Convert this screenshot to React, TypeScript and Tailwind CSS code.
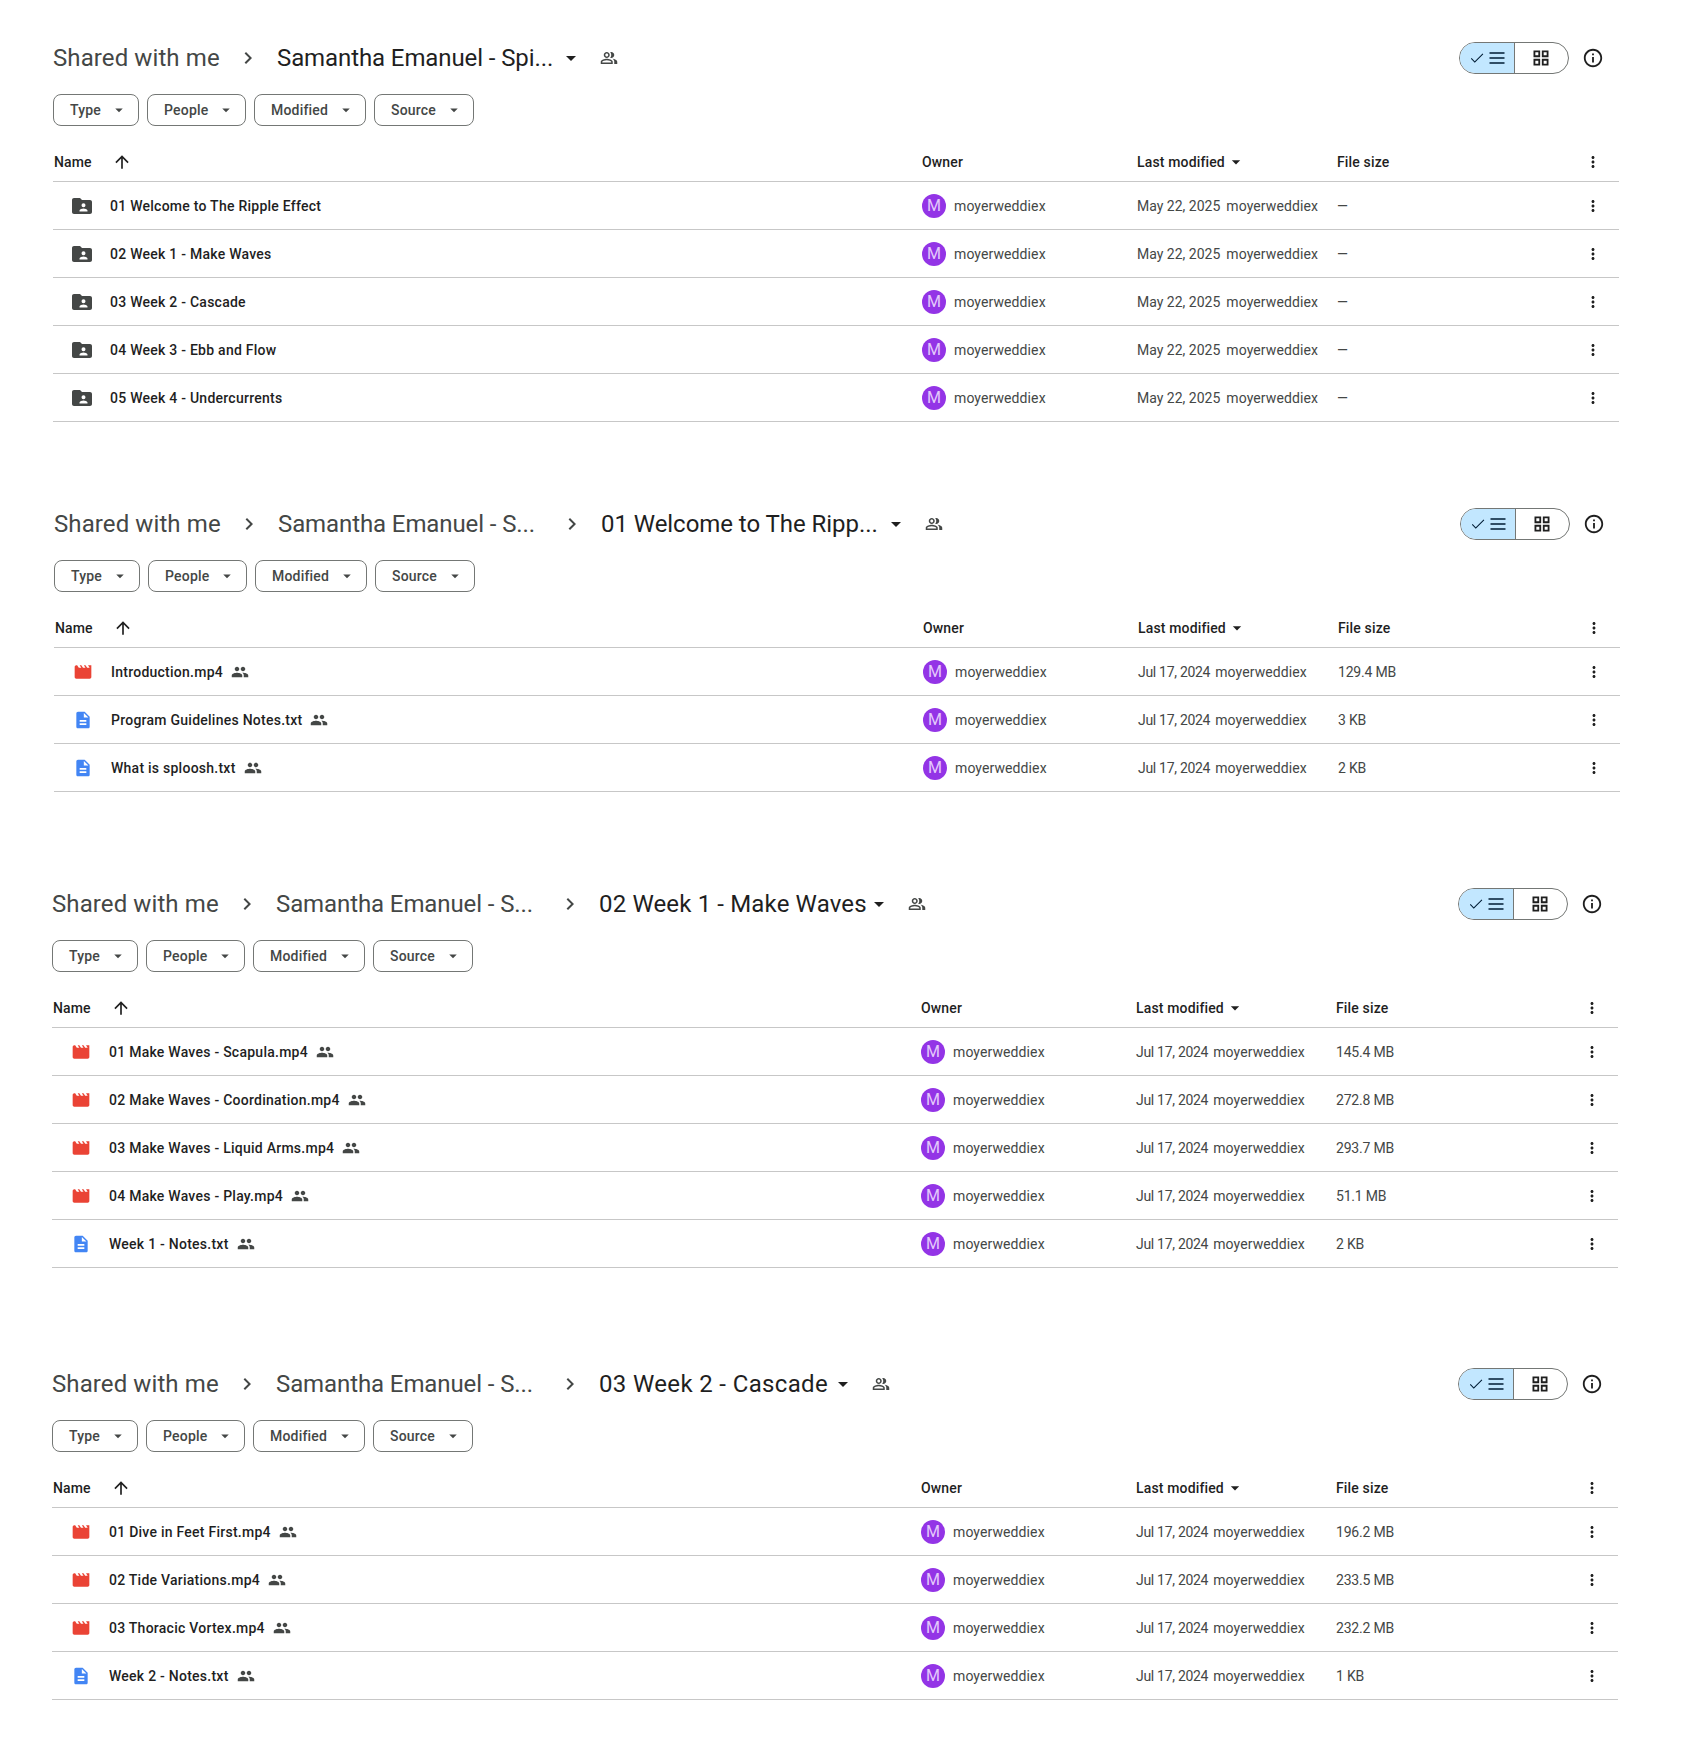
const MORE = 'M12 8c1.1 0 2-.9 2-2s-.9-2-2-2-2 .9-2 2 .9 2 2 2zm0 2c-1.1 0-2 .9-2 2s.9 2 2 2 2-.9 2-2-.9-2-2-2zm0 6c-1.1 0-2 .9-2 2s.9 2 2 2 2-.9 2-2-.9-2-2-2z';
const CARET = 'M7 10l5 5 5-5z';
const PEOPLE = 'M16 11c1.66 0 2.99-1.34 2.99-3S17.66 5 16 5c-1.66 0-3 1.34-3 3s1.34 3 3 3zm-8 0c1.66 0 2.99-1.34 2.99-3S9.66 5 8 5C6.34 5 5 6.34 5 8s1.34 3 3 3zm0 2c-2.33 0-7 1.17-7 3.5V19h14v-2.5c0-2.33-4.67-3.5-7-3.5zm8 0c-.29 0-.62.02-.97.05 1.16.84 1.97 1.97 1.97 3.45V19h6v-2.5c0-2.33-4.67-3.5-7-3.5z';
const PEOPLE_OUTLINE = 'M16.67 13.13C18.04 14.06 19 15.32 19 17v3h4v-3c0-2.18-3.57-3.47-6.33-3.87zM15 12c2.21 0 4-1.79 4-4s-1.79-4-4-4c-.47 0-.91.1-1.33.24C14.5 5.27 15 6.58 15 8s-.5 2.73-1.33 3.76c.42.14.86.24 1.33.24zM9 12c2.21 0 4-1.79 4-4s-1.79-4-4-4-4 1.79-4 4 1.79 4 4 4zm0-6c1.1 0 2 .9 2 2s-.9 2-2 2-2-.9-2-2 .9-2 2-2zm0 7c-2.67 0-8 1.34-8 4v3h16v-3c0-2.66-5.33-4-8-4zm6 5H3v-.99C3.2 16.29 6.3 15 9 15s5.8 1.29 6 2v1z';

type FileKind = 'folder' | 'video' | 'doc';

interface Row {
  name: string;
  kind: FileKind;
  size: string;
}

interface Section {
  crumbs: string[];
  lastCrumbClass: string;
  date: string;
  dateClass: string;
  rows: Row[];
  className: string;
}

function Icon({ d, className }: { d: string; className: string }) {
  return (
    <svg viewBox="0 0 24 24" fill="currentColor" className={className}>
      <path d={d} />
    </svg>
  );
}

function KindIcon({ kind }: { kind: FileKind }) {
  if (kind === 'folder') {
    return (
      <svg viewBox="0 0 24 24" className="w-6 h-6 text-[#444746]" fill="currentColor">
        <path
          fillRule="evenodd"
          d="M20 6h-8l-2-2H4c-1.1 0-2 .9-2 2v12c0 1.1.9 2 2 2h16c1.1 0 2-.9 2-2V8c0-1.1-.9-2-2-2zm-6.5 3.2a2 2 0 1 1 0 4 2 2 0 0 1 0-4zm4 8.3h-8v-1c0-1.33 2.67-2 4-2s4 .67 4 2v1z"
        />
      </svg>
    );
  }
  if (kind === 'video') {
    return (
      <svg viewBox="0 0 24 24" className="w-5 h-5 text-[#ea4335]" fill="currentColor">
        <path d="M18 4l2 3h-3l-2-3h-2l2 3h-3l-2-3H8l2 3H7L5 4H4c-1.1 0-1.99.9-1.99 2L2 18c0 1.1.9 2 2 2h16c1.1 0 2-.9 2-2V4h-4z" />
      </svg>
    );
  }
  return (
    <svg viewBox="0 0 24 24" className="w-5 h-5 text-[#4285f4]" fill="currentColor">
      <path d="M14 2H6c-1.1 0-1.99.9-1.99 2L4 20c0 1.1.89 2 1.99 2H18c1.1 0 2-.9 2-2V8l-6-6zm2 16H8v-2h8v2zm0-4H8v-2h8v2zm-3-5V3.5L18.5 9H13z" />
    </svg>
  );
}

const FOLDERS: Row[] = [
  { name: '01 Welcome to The Ripple Effect', kind: 'folder', size: '—' },
  { name: '02 Week 1 - Make Waves', kind: 'folder', size: '—' },
  { name: '03 Week 2 - Cascade', kind: 'folder', size: '—' },
  { name: '04 Week 3 - Ebb and Flow', kind: 'folder', size: '—' },
  { name: '05 Week 4 - Undercurrents', kind: 'folder', size: '—' },
];

const SECTIONS: Section[] = [
  {
    crumbs: ['Shared with me', 'Samantha Emanuel - Spi...'],
    lastCrumbClass: 'tracking-[-0.1px]',
    date: 'May 22, 2025',
    dateClass: 'gap-[6px]',
    rows: FOLDERS,
    className: 'mt-[34px] ml-[53px]',
  },
  {
    crumbs: ['Shared with me', 'Samantha Emanuel - S...', '01 Welcome to The Ripp...'],
    lastCrumbClass: 'tracking-[-0.05px]',
    date: 'Jul 17, 2024',
    dateClass: 'gap-[5px] tracking-[-0.3px]',
    rows: [
      { name: 'Introduction.mp4', kind: 'video', size: '129.4 MB' },
      { name: 'Program Guidelines Notes.txt', kind: 'doc', size: '3 KB' },
      { name: 'What is sploosh.txt', kind: 'doc', size: '2 KB' },
    ],
    className: 'mt-[78px] ml-[54px]',
  },
  {
    crumbs: ['Shared with me', 'Samantha Emanuel - S...', '02 Week 1 - Make Waves'],
    lastCrumbClass: 'tracking-[0.15px] -mr-[6px]',
    date: 'Jul 17, 2024',
    dateClass: 'gap-[5px] tracking-[-0.3px]',
    rows: [
      { name: '01 Make Waves - Scapula.mp4', kind: 'video', size: '145.4 MB' },
      { name: '02 Make Waves - Coordination.mp4', kind: 'video', size: '272.8 MB' },
      { name: '03 Make Waves - Liquid Arms.mp4', kind: 'video', size: '293.7 MB' },
      { name: '04 Make Waves - Play.mp4', kind: 'video', size: '51.1 MB' },
      { name: 'Week 1 - Notes.txt', kind: 'doc', size: '2 KB' },
    ],
    className: 'mt-[88px] ml-[52px]',
  },
  {
    crumbs: ['Shared with me', 'Samantha Emanuel - S...', '03 Week 2 - Cascade'],
    lastCrumbClass: 'tracking-[0.35px] -mr-[3px]',
    date: 'Jul 17, 2024',
    dateClass: 'gap-[5px] tracking-[-0.3px]',
    rows: [
      { name: '01 Dive in Feet First.mp4', kind: 'video', size: '196.2 MB' },
      { name: '02 Tide Variations.mp4', kind: 'video', size: '233.5 MB' },
      { name: '03 Thoracic Vortex.mp4', kind: 'video', size: '232.2 MB' },
      { name: 'Week 2 - Notes.txt', kind: 'doc', size: '1 KB' },
    ],
    className: 'mt-[92px] ml-[52px]',
  },
];

const COLS = 'grid grid-cols-[869px_215px_200px_228px_54px] items-center';

function Breadcrumbs({ crumbs, lastClass }: { crumbs: string[]; lastClass: string }) {
  return (
    <div className="flex items-center text-[24px] text-[#444746] tracking-[-0.1px]">
      {crumbs.map((crumb, i) => {
        const last = i === crumbs.length - 1;
        // Parent crumbs keep a fixed slot, like the truncated ones in Drive
        const slot = last
          ? `text-[#1f1f1f] ${lastClass}`
          : i === 0
            ? 'w-[177px] tracking-[0.1px]'
            : 'w-[276px]';
        return (
          <div key={i} className="flex items-center">
            <span className={slot}>{crumb}</span>
            {last ? (
              <Icon d={CARET} className="w-6 h-6 ml-[6px] text-[#1f1f1f]" />
            ) : (
              <Icon
                d="M10 6 8.59 7.41 13.17 12l-4.58 4.59L10 18l6-6z"
                className="w-6 h-6 ml-[6px] mr-[17px] text-[#444746]"
              />
            )}
          </div>
        );
      })}
      <Icon d={PEOPLE_OUTLINE} className="w-[18px] h-[18px] ml-[17px] text-[#444746]" />
    </div>
  );
}

function ViewToggle() {
  return (
    <div className="flex items-center">
      <div className="flex h-8 w-[110px] rounded-full border border-[#747775] overflow-hidden">
        <div className="w-[55px] flex items-center justify-center gap-[1px] bg-[#c2e7ff] border-r border-[#747775] text-[#001d35]">
          <Icon d="M9 16.2 4.8 12l-1 1L9 18.4 20.4 7l-1-1z" className="w-[18px] h-[18px]" />
          <Icon d="M3 5h18v2H3zm0 6h18v2H3zm0 6h18v2H3z" className="w-5 h-5" />
        </div>
        <div className="flex-1 flex items-center justify-center pr-[2px] text-[#1f1f1f]">
          <Icon
            d="M3 3h8v8H3zm2.2 2.2v3.6h3.6V5.2zM13 3h8v8h-8zm2.2 2.2v3.6h3.6V5.2zM3 13h8v8H3zm2.2 2.2v3.6h3.6v-3.6zM13 13h8v8h-8zm2.2 2.2v3.6h3.6v-3.6z"
            className="w-5 h-5"
          />
        </div>
      </div>
      <Icon
        d="M11 7h2v2h-2zm0 4h2v6h-2zm1-9C6.48 2 2 6.48 2 12s4.48 10 10 10 10-4.48 10-10S17.52 2 12 2zm0 18c-4.41 0-8-3.59-8-8s3.59-8 8-8 8 3.59 8 8-3.59 8-8 8z"
        className="w-[22px] h-[22px] ml-[13px] mr-[15px] text-[#1f1f1f]"
      />
    </div>
  );
}

function FilterChip({ label, width }: { label: string; width: string }) {
  return (
    <div className={`${width} h-8 flex items-center justify-between pl-4 pr-[10px] rounded-lg border border-[#747775] text-sm font-medium tracking-[0.2px] text-[#444746]`}>
      <span>{label}</span>
      <Icon d={CARET} className="w-[18px] h-[18px]" />
    </div>
  );
}

function FileSection({ section }: { section: Section }) {
  return (
    <section className={`w-[1566px] ${section.className}`}>
      {/* Title bar */}
      <div className="h-12 flex items-center justify-between">
        <Breadcrumbs crumbs={section.crumbs} lastClass={section.lastCrumbClass} />
        <ViewToggle />
      </div>

      {/* Filters */}
      <div className="flex gap-2 mt-3">
        <FilterChip label="Type" width="w-[86px]" />
        <FilterChip label="People" width="w-[99px]" />
        <FilterChip label="Modified" width="w-[112px]" />
        <FilterChip label="Source" width="w-[100px]" />
      </div>

      {/* Table header */}
      <div className={`${COLS} h-[38px] mt-[18px] pb-[2px] border-b border-[#c7c7c7] text-sm font-medium tracking-[0.15px] text-[#1f1f1f]`}>
        <div className="flex items-center pl-px">
          <span>Name</span>
          <Icon d="M4 12l1.41 1.41L11 7.83V20h2V7.83l5.58 5.59L20 12l-8-8-8 8z" className="w-5 h-5 ml-[20px]" />
        </div>
        <div>Owner</div>
        <div className="flex items-center">
          Last modified
          <Icon d={CARET} className="w-5 h-5 ml-px" />
        </div>
        <div>File size</div>
        <div className="flex justify-center pl-px">
          <Icon d={MORE} className="w-[18px] h-[18px]" />
        </div>
      </div>

      {/* Rows */}
      {section.rows.map((row) => (
        <div key={row.name} className={`${COLS} h-12 border-b border-[#c7c7c7] text-sm text-[#444746]`}>
          <div className="flex items-center">
            <div className="w-[57px] flex justify-center pl-[1px]">
              <KindIcon kind={row.kind} />
            </div>
            <span className="font-medium tracking-[0.25px] text-[#1f1f1f]">{row.name}</span>
            {row.kind !== 'folder' && <Icon d={PEOPLE} className="w-[18px] h-[18px] ml-2 text-[#444746]" />}
          </div>
          <div className="flex items-center gap-2">
            <div className="w-6 h-6 rounded-full bg-[#9334e6] text-[#e4c9fb] text-base flex items-center justify-center">M</div>
            <span className="tracking-[0.1px]">moyerweddiex</span>
          </div>
          <div className={`flex ${section.dateClass}`}>
            <span>{section.date}</span>
            <span className="tracking-[0.1px]">moyerweddiex</span>
          </div>
          <div className="tracking-[-0.2px]">{row.size}</div>
          <div className="flex justify-center pl-px text-[#1f1f1f]">
            <Icon d={MORE} className="w-[18px] h-[18px]" />
          </div>
        </div>
      ))}
    </section>
  );
}

export default function App() {
  return (
    <div className="w-[1688px] h-[1748px] bg-white overflow-hidden font-['Roboto',sans-serif] flow-root">
      {SECTIONS.map((section, i) => (
        <FileSection key={i} section={section} />
      ))}
    </div>
  );
}
